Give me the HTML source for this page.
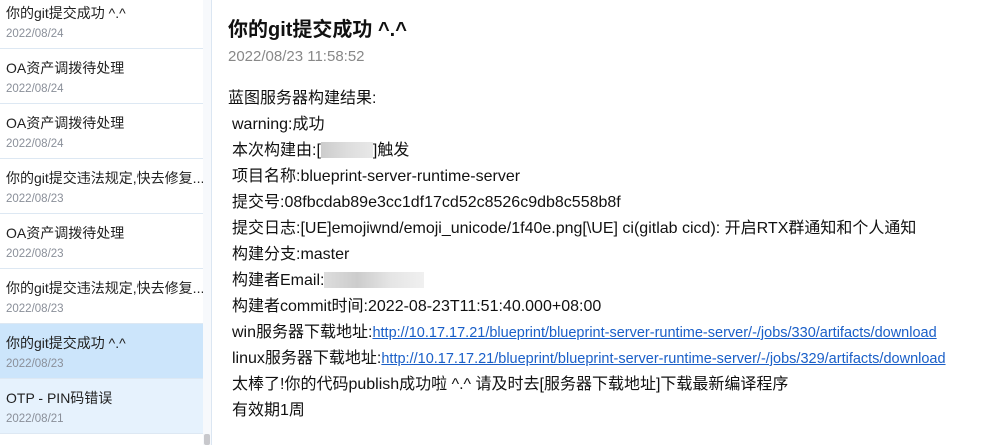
<!DOCTYPE html>
<html><head><meta charset="utf-8"><style>
*{margin:0;padding:0;box-sizing:border-box}
body{width:988px;height:445px;overflow:hidden;background:#fff;font-family:"Liberation Sans","Noto Sans CJK SC",sans-serif;position:relative}
.side{position:absolute;left:0;top:0;width:203px;height:445px;overflow:hidden}
.item{position:absolute;left:0;width:203px;height:55px;border-bottom:1px solid #dde8f3}
.item .t{position:absolute;top:10px;left:6px;font-size:14px;line-height:18px;color:#222;white-space:nowrap}
.item .d{position:absolute;top:33px;left:6px;font-size:11.5px;line-height:14px;color:#8a8f99}
.track{position:absolute;left:203px;top:0;width:9px;height:445px;background:#f7f9fc;border-right:1px solid #dbe6f2}
.thumb{position:absolute;left:204px;top:434px;width:6px;height:11px;background:#c8c8cc;border-radius:2px}
.main{position:absolute;left:228px;top:0}
h1{position:absolute;top:18px;left:0;font-size:20px;line-height:24px;font-weight:bold;color:#111;white-space:nowrap}
.date{position:absolute;top:48px;left:0;font-size:15px;line-height:18px;color:#888;white-space:nowrap}
.body{position:absolute;top:86px;left:0;font-size:16px;line-height:26px;color:#111;white-space:nowrap}
.body div{padding-left:4px}
.body div.f{padding-left:0}
a{color:#1a5fc8;text-decoration:underline;font-size:14.5px}
.blur{display:inline-block;width:52px;height:16px;vertical-align:-3px;background:linear-gradient(90deg,#ccc,#ddd,#e8e8e8)}
.blur2{display:inline-block;width:100px;height:16px;vertical-align:-3px;background:linear-gradient(90deg,#ddd,#ccc,#e5e5e5,#f0f0f0)}
</style></head><body>
<div class="side">
<div class="item" style="top:-6px"><div class="t">你的git提交成功 ^.^</div><div class="d">2022/08/24</div></div>
<div class="item" style="top:49px"><div class="t">OA资产调拨待处理</div><div class="d">2022/08/24</div></div>
<div class="item" style="top:104px"><div class="t">OA资产调拨待处理</div><div class="d">2022/08/24</div></div>
<div class="item" style="top:159px"><div class="t">你的git提交违法规定,快去修复...</div><div class="d">2022/08/23</div></div>
<div class="item" style="top:214px"><div class="t">OA资产调拨待处理</div><div class="d">2022/08/23</div></div>
<div class="item" style="top:269px"><div class="t">你的git提交违法规定,快去修复...</div><div class="d">2022/08/23</div></div>
<div class="item" style="top:324px;background:#cce5fb"><div class="t">你的git提交成功 ^.^</div><div class="d">2022/08/23</div></div>
<div class="item" style="top:379px;background:#e6f2fd"><div class="t">OTP - PIN码错误</div><div class="d">2022/08/21</div></div>
</div>
<div class="track"></div><div class="thumb"></div>
<div class="main">
<h1>你的git提交成功 ^.^</h1>
<div class="date">2022/08/23 11:58:52</div>
<div class="body">
<div class="f">蓝图服务器构建结果:</div>
<div>warning:成功</div>
<div>本次构建由:[<span class="blur"></span>]触发</div>
<div>项目名称:blueprint-server-runtime-server</div>
<div>提交号:08fbcdab89e3cc1df17cd52c8526c9db8c558b8f</div>
<div>提交日志:[UE]emojiwnd/emoji_unicode/1f40e.png[\UE] ci(gitlab cicd): 开启RTX群通知和个人通知</div>
<div>构建分支:master</div>
<div>构建者Email:<span class="blur2"></span></div>
<div>构建者commit时间:2022-08-23T11:51:40.000+08:00</div>
<div>win服务器下载地址:<a>http://10.17.17.21/blueprint/blueprint-server-runtime-server/-/jobs/330/artifacts/download</a></div>
<div>linux服务器下载地址:<a>http://10.17.17.21/blueprint/blueprint-server-runtime-server/-/jobs/329/artifacts/download</a></div>
<div>太棒了!你的代码publish成功啦 ^.^ 请及时去[服务器下载地址]下载最新编译程序</div>
<div>有效期1周</div>
</div>
</div>
</body></html>
